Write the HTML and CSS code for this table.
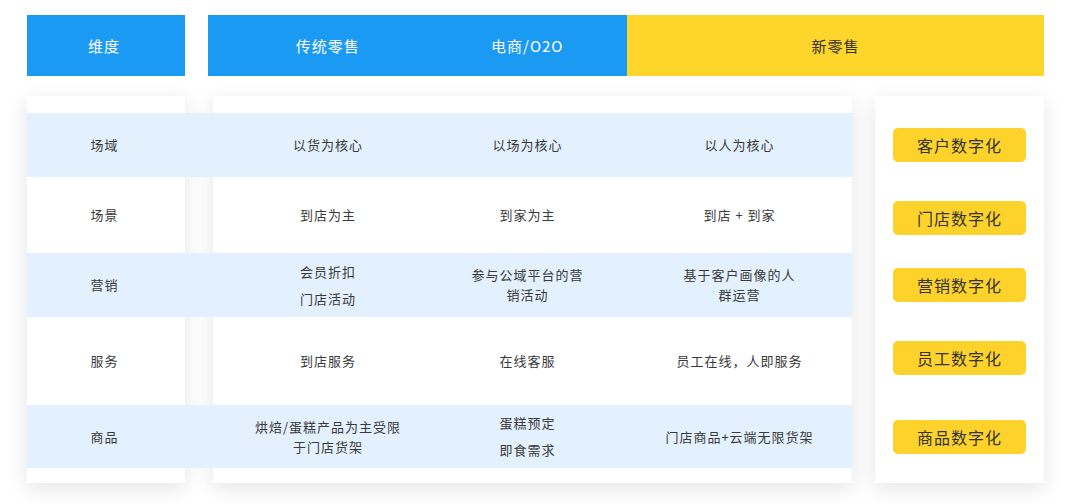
FILE: index.html
```html
<!DOCTYPE html>
<html lang="zh-CN">
<head>
<meta charset="utf-8">
<title>新零售对比</title>
<link rel="stylesheet" href="styles.css">
</head>
<body>
<div class="page">
  <div class="head">
    <div class="h-dim">维度</div>
    <div class="h-blue">
      <span class="h-col">传统零售</span>
      <span class="h-col">电商/O2O</span>
    </div>
    <div class="h-yellow">新零售</div>
  </div>
  <div class="board">
    <div class="table">
      <div class="card card-left"></div>
      <div class="card card-mid"></div>
      <div class="row r1 band">
        <div class="c c1">场域</div><div class="gapc"></div>
        <div class="c">以货为核心</div>
        <div class="c">以场为核心</div>
        <div class="c">以人为核心</div>
      </div>
      <div class="row r2">
        <div class="c c1">场景</div><div class="gapc"></div>
        <div class="c">到店为主</div>
        <div class="c">到家为主</div>
        <div class="c">到店 + 到家</div>
      </div>
      <div class="row r3 band">
        <div class="c c1">营销</div><div class="gapc"></div>
        <div class="c paras"><p>会员折扣</p><p>门店活动</p></div>
        <div class="c">参与公域平台的营<br>销活动</div>
        <div class="c">基于客户画像的人<br>群运营</div>
      </div>
      <div class="row r4">
        <div class="c c1">服务</div><div class="gapc"></div>
        <div class="c">到店服务</div>
        <div class="c">在线客服</div>
        <div class="c">员工在线，人即服务</div>
      </div>
      <div class="row r5 band">
        <div class="c c1">商品</div><div class="gapc"></div>
        <div class="c">烘焙/蛋糕产品为主受限<br>于门店货架</div>
        <div class="c paras"><p>蛋糕预定</p><p>即食需求</p></div>
        <div class="c">门店商品+云端无限货架</div>
      </div>
    </div>
    <div class="side">
      <div class="btn b1">客户数字化</div>
      <div class="btn b2">门店数字化</div>
      <div class="btn b3">营销数字化</div>
      <div class="btn b4">员工数字化</div>
      <div class="btn b5">商品数字化</div>
    </div>
  </div>
</div>
</body>
</html>
```

FILE: styles.css
```css
* { box-sizing: border-box; }
html, body { margin: 0; padding: 0; background: #ffffff; }
body {
  font-family: "Noto Sans CJK SC", "Noto Sans", sans-serif;
  color: #333333;
}
.page {
  width: 1080px;
  height: 504px;
  padding: 15px 0 0 27px;
}
.head {
  display: flex;
  height: 61px;
}
.h-dim, .h-blue, .h-yellow {
  display: flex;
  align-items: center;
  font-size: 15px;
  letter-spacing: 1px;
}
.h-dim {
  width: 158px;
  justify-content: center;
  padding-right: 4px;
  background: #1b9af4;
  color: #ffffff;
}
.h-blue {
  width: 419px;
  margin-left: 23px;
  padding-left: 20px;
  background: #1b9af4;
  color: #ffffff;
}
.h-col {
  width: 200px;
  text-align: center;
}
.h-yellow {
  width: 417px;
  justify-content: center;
  background: #fed52a;
  color: #333333;
}
.board {
  display: flex;
  gap: 23px;
  margin-top: 20px;
}
.table {
  width: 825px;
  display: grid;
  grid-template-columns: 158px 28px 639px;
  grid-template-rows: 17px 64px 76px 64px 88px 63px 15px;
}
.card {
  grid-row: 1 / -1;
  background: #ffffff;
  box-shadow: 0 5px 20px rgba(0, 0, 0, 0.11);
}
.card-left { grid-column: 1; }
.card-mid { grid-column: 3; }
.row {
  grid-column: 1 / -1;
  display: grid;
  grid-template-columns: 158px 43px 200px 199px 225px;
  align-items: center;
  font-size: 13px;
  letter-spacing: 1px;
  line-height: 20px;
  color: #3a3a3a;
}
.band { background: #e3f0fd; }
.r1 { grid-row: 2; }
.r2 { grid-row: 3; }
.r3 { grid-row: 4; }
.r4 { grid-row: 5; }
.r5 { grid-row: 6; }
.c { text-align: center; }
.c1 { padding-right: 3px; }
.paras p { margin: 0; }
.paras p + p { margin-top: 7px; }
.side {
  width: 169px;
  height: 387px;
  background: #ffffff;
  box-shadow: 0 5px 20px rgba(0, 0, 0, 0.11);
  display: flex;
  flex-direction: column;
  align-items: center;
  padding-top: 32px;
}
.btn {
  width: 133px;
  height: 34px;
  border-radius: 5px;
  background: #fdd22a;
  color: #333333;
  font-size: 16px;
  letter-spacing: 1px;
  display: flex;
  align-items: center;
  justify-content: center;
}
.b2 { margin-top: 39px; }
.b3 { margin-top: 33px; }
.b4 { margin-top: 39px; }
.b5 { margin-top: 45px; }
```
